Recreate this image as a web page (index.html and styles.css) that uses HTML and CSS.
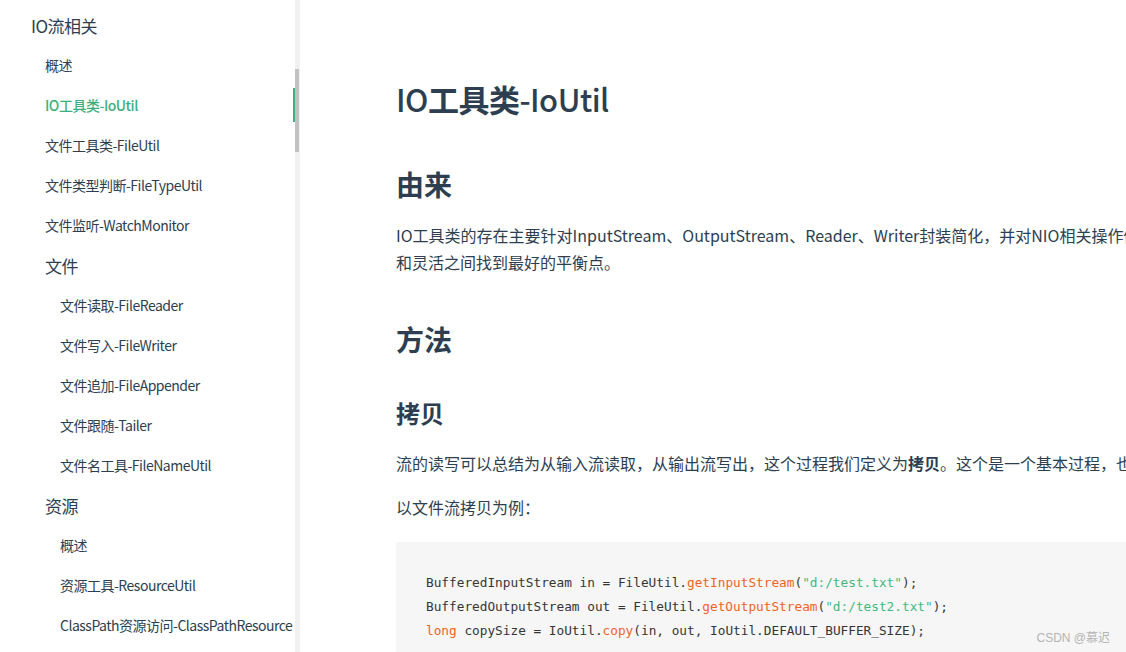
FILE: index.html
```html
<!DOCTYPE html>
<html lang="zh-CN">
<head>
<meta charset="utf-8">
<title>IO工具类-IoUtil</title>
<link rel="stylesheet" href="styles.css">
</head>
<body>
<div class="page">
  <aside class="sidebar">
    <nav class="nav">
      <ul class="nav-list">
        <li class="nav-row lvl-0"><a class="nav-link">IO流相关</a></li>
        <li class="nav-row lvl-1"><a class="nav-link">概述</a></li>
        <li class="nav-row lvl-1"><a class="nav-link active">IO工具类-IoUtil</a></li>
        <li class="nav-row lvl-1"><a class="nav-link">文件工具类-FileUtil</a></li>
        <li class="nav-row lvl-1"><a class="nav-link">文件类型判断-FileTypeUtil</a></li>
        <li class="nav-row lvl-1"><a class="nav-link">文件监听-WatchMonitor</a></li>
        <li class="nav-row lvl-1 head"><a class="nav-link">文件</a></li>
        <li class="nav-row lvl-2"><a class="nav-link">文件读取-FileReader</a></li>
        <li class="nav-row lvl-2"><a class="nav-link">文件写入-FileWriter</a></li>
        <li class="nav-row lvl-2"><a class="nav-link">文件追加-FileAppender</a></li>
        <li class="nav-row lvl-2"><a class="nav-link">文件跟随-Tailer</a></li>
        <li class="nav-row lvl-2"><a class="nav-link">文件名工具-FileNameUtil</a></li>
        <li class="nav-row lvl-1 head"><a class="nav-link">资源</a></li>
        <li class="nav-row lvl-2"><a class="nav-link">概述</a></li>
        <li class="nav-row lvl-2"><a class="nav-link">资源工具-ResourceUtil</a></li>
        <li class="nav-row lvl-2"><a class="nav-link">ClassPath资源访问-ClassPathResource</a></li>
      </ul>
    </nav>
    <div class="scroll-track"><div class="scroll-thumb"></div></div>
  </aside>
  <main class="content">
    <h1 class="title"><span class="latin">IO</span>工具类<span class="latin">-IoUtil</span></h1>
    <h2 class="h2 first">由来</h2>
    <p class="text p-intro">IO工具类的存在主要针对InputStream、OutputStream、Reader、Writer封装简化，并对NIO相关操作做封装简化。总体来说，Hutool对IO的封装，主要是工具层面，我们努力做到在便捷、性能<br>和灵活之间找到最好的平衡点。</p>
    <h2 class="h2 second">方法</h2>
    <h3 class="h3">拷贝</h3>
    <p class="text p-copy">流的读写可以总结为从输入流读取，从输出流写出，这个过程我们定义为<strong>拷贝</strong>。这个是一个基本过程，也是文件、流操作的基础。</p>
    <p class="text p-example">以文件流拷贝为例：</p>
    <pre class="code"><code><span class="line">BufferedInputStream in = FileUtil.<span class="fn">getInputStream</span>(<span class="str">"d:/test.txt"</span>);</span>
<span class="line">BufferedOutputStream out = FileUtil.<span class="fn">getOutputStream</span>(<span class="str">"d:/test2.txt"</span>);</span>
<span class="line"><span class="kw">long</span> copySize = IoUtil.<span class="fn">copy</span>(in, out, IoUtil.DEFAULT_BUFFER_SIZE);</span></code></pre>
  </main>
</div>
<div class="watermark">CSDN @慕迟</div>
</body>
</html>
```
FILE: styles.css
```css
html, body {
  margin: 0;
  padding: 0;
  width: 100%;
  height: 100%;
  overflow: hidden;
  background: #ffffff;
}

body {
  font-family: "Noto Sans CJK SC", "Noto Sans", sans-serif;
  color: #2c3e50;
}

.page {
  display: flex;
  height: 652px;
}

/* ---------- sidebar ---------- */
.sidebar {
  width: 300px;
  flex: none;
  display: flex;
}

.nav {
  flex: 1;
  min-width: 0;
  overflow: hidden;
  padding-top: 5px;
}

.nav-list {
  list-style: none;
  margin: 0;
  padding: 0;
}

.nav-row {
  height: 40px;
  display: flex;
  align-items: center;
}

.nav-link {
  flex: 1;
  height: 34px;
  display: flex;
  align-items: center;
  font-size: 14px;
  letter-spacing: -0.5px;
  color: #2c3e50;
  text-decoration: none;
  white-space: nowrap;
}

.lvl-0 .nav-link {
  padding-left: 31px;
  font-size: 17px;
}

.lvl-1 .nav-link {
  padding-left: 45px;
}

.lvl-1.head .nav-link {
  font-size: 17px;
}

.lvl-2 .nav-link {
  padding-left: 60px;
}

.nav-link.active {
  color: #3eaf7c;
  font-weight: 500;
  border-right: 2px solid #3eaf7c;
}

.scroll-track {
  width: 5px;
  flex: none;
  background: #f1f1f1;
}

.scroll-thumb {
  width: 4px;
  height: 83px;
  margin-top: 69px;
  background: #c1c1c1;
}

/* ---------- content ---------- */
.content {
  flex: none;
  width: 1500px;
  padding-left: 96px;
}

.title {
  margin: 79px 0 0;
  font-size: 31px;
  line-height: 40px;
  letter-spacing: -0.5px;
  font-weight: 700;
  color: #2c3e50;
}

.title .latin {
  font-weight: 500;
}

.h2 {
  margin: 0;
  font-size: 28px;
  line-height: 36px;
  font-weight: 700;
  color: #2c3e50;
}

.h2.first {
  margin-top: 47px;
}

.h2.second {
  margin-top: 45.5px;
}

.h3 {
  margin: 41px 0 0;
  font-size: 24px;
  line-height: 30px;
  font-weight: 700;
  color: #2c3e50;
}

.text {
  margin: 0;
  font-size: 16px;
  line-height: 27px;
  color: #2c3e50;
  white-space: nowrap;
}

.text strong {
  font-weight: 700;
}

.p-intro {
  margin-top: 19.5px;
}

.p-copy {
  margin-top: 22px;
}

.p-example {
  margin-top: 17px;
}

.code {
  margin: 21px 0 0;
  padding: 29px 30px 20px;
  background: #f6f6f6;
  font-family: "DejaVu Sans Mono", "Liberation Mono", monospace;
  font-size: 12.75px;
  line-height: 24px;
  color: #353535;
}

.code .fn,
.code .kw {
  color: #f2621f;
}

.code .str {
  color: #42b983;
}

/* ---------- watermark ---------- */
.watermark {
  position: absolute;
  right: 16px;
  bottom: 7px;
  font-family: "Liberation Sans", "Noto Sans CJK SC", sans-serif;
  font-size: 12px;
  color: #b4b4b4;
}
```
